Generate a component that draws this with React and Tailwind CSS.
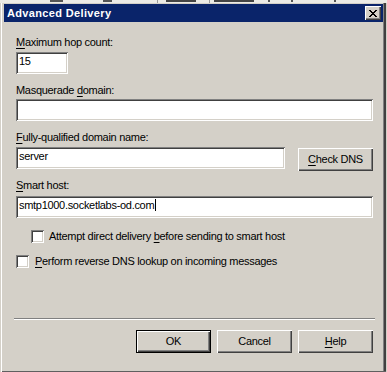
import React from 'react';

const sunken =
  'bg-white shadow-[inset_1px_1px_0_#808080,inset_-1px_-1px_0_#ffffff,inset_2px_2px_0_#404040,inset_-2px_-2px_0_#d4d0c8]';
const raised =
  'bg-[#d4d0c8] shadow-[inset_1px_1px_0_#ffffff,inset_-1px_-1px_0_#404040,inset_-2px_-2px_0_#808080]';

function U({ children }) {
  return <span className="underline underline-offset-[2px] decoration-1">{children}</span>;
}

function Label({ className = '', children }) {
  return <div className={`h-[13px] leading-[13px] ${className}`}>{children}</div>;
}

function Field({ className = '', children }) {
  return (
    <div className={`h-[22px] pl-[3px] pt-[3px] leading-[13px] flex items-start ${sunken} ${className}`}>
      {children}
    </div>
  );
}

function Button({ className = '', isDefault, children }) {
  if (isDefault) {
    return (
      <div className={`w-[75px] h-[23px] border border-black ${className}`}>
        <div className={`h-full flex items-center justify-center ${raised}`}>{children}</div>
      </div>
    );
  }
  return (
    <div className={`w-[75px] h-[23px] flex items-center justify-center ${raised} ${className}`}>
      {children}
    </div>
  );
}

function Checkbox() {
  return <div className={`w-[13px] h-[13px] shrink-0 ${sunken}`} />;
}

export default function App() {
  return (
    <div
      className="w-[387px] h-[372px] overflow-hidden bg-[#d4d0c8] text-black text-[11px] tracking-[-0.3px] flex flex-col"
      style={{ fontFamily: '"Liberation Sans", Arial, sans-serif' }}
    >
      {/* window behind, peeking out above */}
      <div className="h-[3px] bg-[#ecebe6] flex items-start shrink-0">
        <span className="ml-[50px] w-[13px] h-[2px] bg-[#555]" />
        <span className="ml-[40px] w-[9px] h-[2px] bg-[#555]" />
        <span className="ml-[45px] w-[1px] h-[3px] bg-[#999]" />
        <span className="ml-[8px] w-[30px] h-[2px] bg-[#444]" />
        <span className="ml-[13px] w-[1px] h-[3px] bg-[#999]" />
        <span className="ml-[4px] w-[40px] h-[2px] bg-[#444]" />
        <span className="ml-[14px] w-[2px] h-[2px] bg-[#555]" />
        <span className="ml-[21px] w-[2px] h-[2px] bg-[#555]" />
        <span className="ml-[41px] w-[2px] h-[2px] bg-[#555]" />
      </div>

      <div className="w-[386px] h-[369px] pt-[1px] pl-[4px] pr-[3px] pb-[2px] flex flex-col shadow-[inset_1px_0_0_#d4d0c8,inset_2px_0_0_#ffffff,inset_0_-1px_0_#606060,inset_-2px_0_0_#404040,inset_-3px_0_0_#808080]">
        {/* title bar */}
        <div className="h-[18px] bg-[#0a246a] flex items-center justify-between pl-[3px] pr-[2px] shrink-0">
          <span className="text-white font-bold text-[11px] tracking-[0.35px]">Advanced Delivery</span>
          <div className={`w-[16px] h-[14px] flex items-center justify-center ${raised}`}>
            <svg width="8" height="7" viewBox="0 0 8 7" shapeRendering="crispEdges">
              <path
                d="M0 0h2v1H0zM6 0h2v1H6zM1 1h2v1H1zM5 1h2v1H5zM2 2h4v1H2zM3 3h2v1H3zM2 4h4v1H2zM1 5h2v1H1zM5 5h2v1H5zM0 6h2v1H0zM6 6h2v1H6z"
                fill="#000"
              />
            </svg>
          </div>
        </div>

        {/* body */}
        <div className="flex flex-col pl-[12px] pr-[10px]">
          <Label className="mt-[14px]">
            <U>M</U>aximum hop count:
          </Label>
          <Field className="mt-[3px] w-[52px]">15</Field>

          <Label className="mt-[10px]">
            Masquerade <U>d</U>omain:
          </Label>
          <Field className="mt-[2px] w-[357px]" />

          <Label className="mt-[10px]">
            <U>F</U>ully-qualified domain name:
          </Label>
          <div className="mt-[3px] flex items-start">
            <Field className="w-[269px]">server</Field>
            <Button className="ml-[13px] mt-[1px] h-[21px]">
              <span>
                <U>C</U>heck DNS
              </span>
            </Button>
          </div>

          <Label className="mt-[8px]">
            <U>S</U>mart host:
          </Label>
          <Field className="mt-[4px] w-[357px]">
            smtp1000.socketlabs-od.com
            <span className="ml-[1px] w-[1px] h-[12px] bg-black" />
          </Field>

          <div className="mt-[12px] ml-[15px] flex items-center h-[13px]">
            <Checkbox />
            <span className="ml-[5px] leading-[13px]">
              Attempt direct delivery <U>b</U>efore sending to smart host
            </span>
          </div>

          <div className="mt-[12px] flex items-center h-[13px]">
            <Checkbox />
            <span className="ml-[6px] leading-[13px]">
              <U>P</U>erform reverse DNS lookup on incoming messages
            </span>
          </div>

          <div className="mt-[50px] -ml-[2px] w-[361px] border-t border-t-[#808080] border-b border-b-white" />

          <div className="mt-[10px] flex justify-end gap-[6px]">
            <Button isDefault>OK</Button>
            <Button>Cancel</Button>
            <Button>
              <span>
                <U>H</U>elp
              </span>
            </Button>
          </div>
        </div>
      </div>
    </div>
  );
}
